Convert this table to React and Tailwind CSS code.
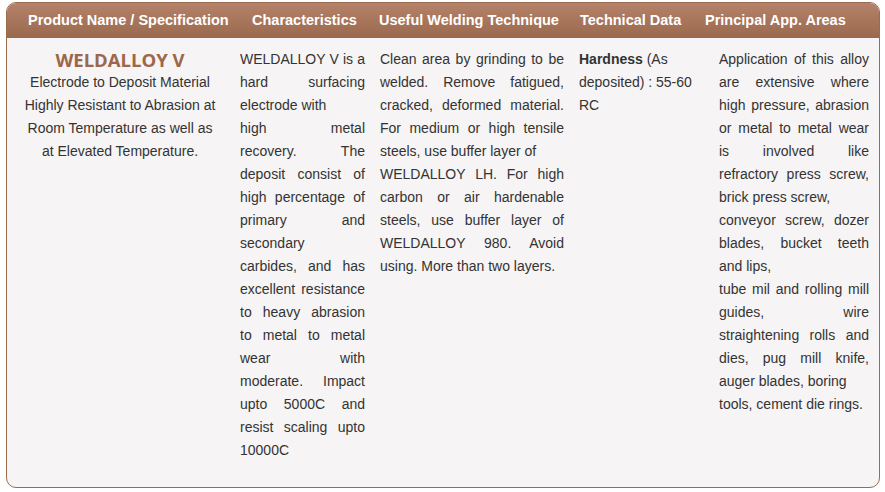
import React from "react";

const J = "text-justify [text-align-last:justify] whitespace-nowrap";
const L = "text-left whitespace-nowrap";

function Lines({ lines, className = "" }) {
  return (
    <div className={className}>
      {lines.map(([t, j], i) => (
        <div key={i} className={j ? J : L}>
          {t}
        </div>
      ))}
    </div>
  );
}

const col2 = [
  ["WELDALLOY V is a", 1],
  ["hard surfacing", 1],
  ["electrode with", 0],
  ["high metal", 1],
  ["recovery. The", 1],
  ["deposit consist of", 1],
  ["high percentage of", 1],
  ["primary and", 1],
  ["secondary", 0],
  ["carbides, and has", 1],
  ["excellent resistance", 1],
  ["to heavy abrasion", 1],
  ["to metal to metal", 1],
  ["wear with", 1],
  ["moderate. Impact", 1],
  ["upto 5000C and", 1],
  ["resist scaling upto", 1],
  ["10000C", 0],
];

const col3 = [
  ["Clean area by grinding to be", 1],
  ["welded. Remove fatigued,", 1],
  ["cracked, deformed material.", 1],
  ["For medium or high tensile", 1],
  ["steels, use buffer layer of", 0],
  ["WELDALLOY LH. For high", 1],
  ["carbon or air hardenable", 1],
  ["steels, use buffer layer of", 1],
  ["WELDALLOY 980. Avoid", 1],
  ["using. More than two layers.", 0],
];

const col5 = [
  ["Application of this alloy", 1],
  ["are extensive where", 1],
  ["high pressure, abrasion", 1],
  ["or metal to metal wear", 1],
  ["is involved like", 1],
  ["refractory press screw,", 1],
  ["brick press screw,", 0],
  ["conveyor screw, dozer", 1],
  ["blades, bucket teeth", 1],
  ["and lips,", 0],
  ["tube mil and rolling mill", 1],
  ["guides, wire", 1],
  ["straightening rolls and", 1],
  ["dies, pug mill knife,", 1],
  ["auger blades, boring", 0],
  ["tools, cement die rings.", 0],
];

export default function App() {
  return (
    <div className="w-[885px] h-[492px] bg-white pt-[2px] pl-[6px] font-['Liberation_Sans',Arial,sans-serif]">
      <div className="w-[874px] h-[486px] rounded-[10px] border border-[#9b6b50] overflow-hidden bg-[#f6f4f4]">
        <div className="h-[35px] bg-linear-to-b from-[#b5826a] to-[#9a694d] grid grid-cols-[224px_127px_201px_125px_1fr] pl-[21px] items-center text-white font-bold text-[14.5px] whitespace-nowrap">
          <div>Product Name / Specification</div>
          <div>Characteristics</div>
          <div>Useful Welding Technique</div>
          <div>Technical Data</div>
          <div>Principal App. Areas</div>
        </div>
        <div className="grid grid-cols-[226px_140px_199px_140px_1fr] pt-[10px] text-[14px] leading-[23px] text-[#333333]">
          <div className="text-center">
            <div className="font-['Open_Sans',sans-serif] font-bold text-[18.5px] leading-[23px] text-[#9c674b]">
              WELDALLOY V
            </div>
            <div>Electrode to Deposit Material</div>
            <div>Highly Resistant to Abrasion at</div>
            <div>Room Temperature as well as</div>
            <div>at Elevated Temperature.</div>
          </div>
          <div className="pl-[7px]">
            <Lines lines={col2} className="w-[125px]" />
          </div>
          <div className="pl-[7px]">
            <Lines lines={col3} className="w-[184px]" />
          </div>
          <div className="pl-[7px]">
            <div>
              <span className="font-bold">Hardness</span> (As
            </div>
            <div>deposited) : 55-60</div>
            <div>RC</div>
          </div>
          <div className="pl-[7px]">
            <Lines lines={col5} className="w-[150px]" />
          </div>
        </div>
      </div>
    </div>
  );
}
